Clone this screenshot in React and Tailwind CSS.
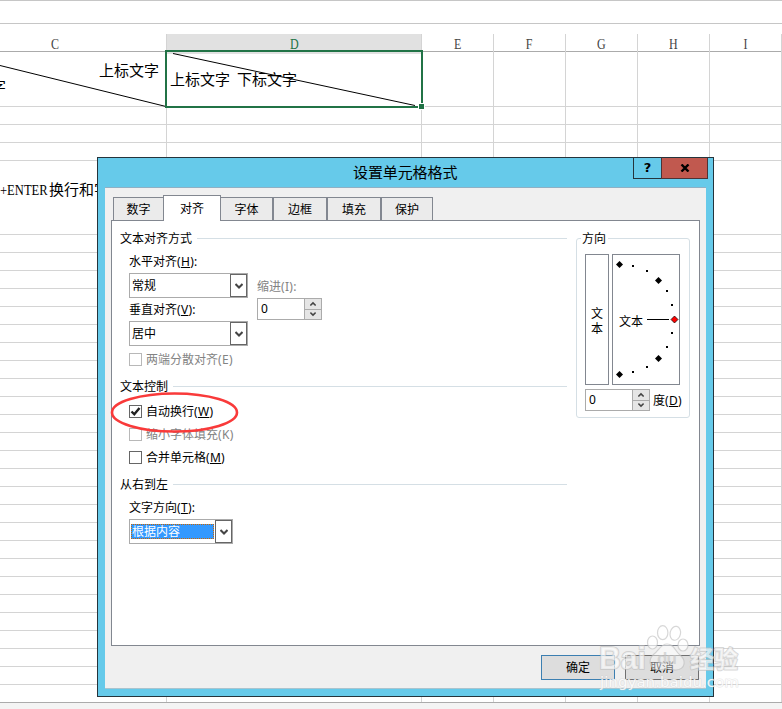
import React, { useState } from 'react';

const columns = ['C', 'D', 'E', 'F', 'G', 'H', 'I'];
const gridCols = 'grid grid-cols-[167px_255px_72px_72px_72px_72px_72px]';
const uiFont = 'font-["Noto_Sans","Noto_Sans_CJK_SC",sans-serif]';
const cellFont = 'font-["Liberation_Serif","Noto_Sans_CJK_SC",serif]';

// Empty sheet row, the height class is passed in by the caller
function SheetRow({ height = 'h-[18px]', children }) {
  return (
    <div className={`${gridCols} ${height}`}>
      {columns.map((c) => (
        <div key={c} className="relative border-r border-b border-[#d4d4d4]">
          {children ? children[c] : null}
        </div>
      ))}
    </div>
  );
}

function Chevron({ up = false, size = 8 }) {
  return (
    <svg width={size} height={size} viewBox="0 0 8 8" fill="none" stroke="#444" strokeWidth="2">
      <path d={up ? 'M0.5 6 L4 2.5 L7.5 6' : 'M0.5 2 L4 5.5 L7.5 2'} />
    </svg>
  );
}

function Combo({ value, width = 'w-[119px]', active = false }) {
  return (
    <div className={`${width} flex h-[25px] border border-[#ababab] bg-white`}>
      <div className="flex flex-1 items-center pl-px">
        <span
          className={`flex h-[15px] flex-1 items-center text-[12px] ${
            active ? 'mr-px border border-dotted border-[#cc6600] bg-[#3399ff] text-white' : 'pl-px'
          }`}
        >
          {value}
        </span>
      </div>
      <div className="flex w-[17px] items-center justify-center border border-[#666] bg-white">
        <Chevron size={8} />
      </div>
    </div>
  );
}

function Spinner() {
  return (
    <div className="flex h-[22px] w-[65px] border border-[#ababab] bg-white">
      <span className="flex flex-1 items-center pl-[3px] text-[12px]">0</span>
      <div className="flex w-[17px] flex-col border-l border-[#ababab] bg-[#e5e5e5]">
        <div className="flex flex-1 items-center justify-center border-b border-[#ababab]">
          <Chevron up size={6} />
        </div>
        <div className="flex flex-1 items-center justify-center">
          <Chevron size={6} />
        </div>
      </div>
    </div>
  );
}

function Hotkey({ letter, plain }) {
  return <span className="tracking-[0.3px]">({plain ? letter : <u>{letter}</u>})</span>;
}

function Check({ label, hotkey, disabled, checked, onClick }) {
  return (
    <div className="flex h-[13px] items-center gap-1 pl-[17px]" onClick={onClick}>
      <div
        className={`flex h-[13px] w-[13px] shrink-0 items-center justify-center border bg-white ${
          disabled ? 'border-[#b8b8b8]' : 'border-[#666]'
        }`}
      >
        {checked && (
          <svg width="11" height="11" viewBox="0 0 11 11" fill="none" stroke="#222" strokeWidth="2.4">
            <path d="M1.5 5.5 L4.3 8.3 L9.5 2" />
          </svg>
        )}
      </div>
      <span className={`text-[12px] leading-[13px] ${disabled ? 'text-[#838383]' : 'text-black'}`}>
        {label}
        <Hotkey letter={hotkey} plain={disabled} />
      </span>
    </div>
  );
}

function SectionTitle({ children }) {
  return (
    <div className="flex h-4 items-center gap-[5px] pl-2 text-[12px] leading-4">
      <span>{children}</span>
      <div className="-mt-px h-px flex-1 bg-[#d5dfe5]" />
    </div>
  );
}

function Label({ text, hotkey }) {
  return (
    <div className="h-4 pl-[17px] text-[12px] leading-4">
      {text}
      <Hotkey letter={hotkey} />:
    </div>
  );
}

function Dial() {
  const diamonds = [[7, 10], [46, 26], [46, 104], [7, 120]];
  const dots = [[20, 11], [34, 16], [54, 36], [59, 50], [59, 78], [54, 92], [34, 112], [20, 117]];
  return (
    <div className="relative h-[131px] w-[68px] border border-[#828790]">
      <svg className="absolute -top-px -left-px" width="68" height="131">
        {diamonds.map(([x, y]) => (
          <path key={`${x}-${y}`} d={`M${x + 0.5} ${y - 3} l3.5 3.5 l-3.5 3.5 l-3.5 -3.5 z`} />
        ))}
        {dots.map(([x, y]) => (
          <rect key={`${x}-${y}`} x={x} y={y} width="2" height="2" />
        ))}
        <rect x="35" y="65" width="22" height="1" />
        <path d="M62.5 62 l3.5 3.5 l-3.5 3.5 l-3.5 -3.5 z" fill="#f00" stroke="#000" strokeWidth="0.7" />
      </svg>
      <span className="block pt-[59px] pl-1.5 text-[12px] leading-4">文本</span>
    </div>
  );
}

function Orientation() {
  return (
    <div className="mt-[17px] ml-[9px] h-[180px] w-[114px] rounded-[3px] border border-[#d5dfe5]">
      <div className="-mt-2 ml-1 h-4 w-[27px] bg-white pl-px text-[12px] leading-4">方向</div>
      <div className="mt-[7px] ml-2 flex gap-[3px]">
        <div className="flex h-[131px] w-6 flex-col items-center border border-[#828790] pt-[51px] text-[12px] leading-[15px]">
          <span>文</span>
          <span>本</span>
        </div>
        <Dial />
      </div>
      <div className="mt-1 ml-2 flex items-center gap-[3px] text-[12px]">
        <Spinner />
        <span className="pt-px leading-4">
          度<Hotkey letter="D" />
        </span>
      </div>
    </div>
  );
}

function Tabs() {
  const tabs = [
    { name: '数字', width: 'w-[50px]' },
    { name: '对齐', width: 'w-[58px]', active: true },
    { name: '字体', width: 'w-[52px]' },
    { name: '边框', width: 'w-[54px]' },
    { name: '填充', width: 'w-[54px]' },
    { name: '保护', width: 'w-[52px]' },
  ];
  return (
    <div className="flex h-[25px] items-end pl-2 text-[12px]">
      {tabs.map((tab) =>
        tab.active ? (
          <div
            key={tab.name}
            className={`${tab.width} relative z-10 -mb-px flex h-[26px] items-center justify-center border border-b-0 border-[#828790] bg-white`}
          >
            {tab.name}
          </div>
        ) : (
          <div
            key={tab.name}
            className={`${tab.width} flex h-[23px] items-center justify-center border border-b-0 border-[#828790] bg-[#ebebeb] pt-0.5 first:border-r-0 nth-3:border-l-0`}
          >
            {tab.name}
          </div>
        )
      )}
    </div>
  );
}

function FormatDialog() {
  const [wrap, setWrap] = useState(true);

  return (
    <div className={`${uiFont} absolute top-[157px] left-[97px] flex h-[540px] w-[617px] flex-col border border-[#25343c] bg-[#66caea] text-black`}>
      {/* Title bar */}
      <div className="flex h-[29px] justify-end">
        <div className="flex-1 pl-[255px] text-[15px] leading-[29px] tracking-[-0.1px] whitespace-nowrap">设置单元格格式</div>
        <div className="-mt-px flex h-[22px] w-[75px] font-['DejaVu_Sans',sans-serif] font-bold">
          <div className="flex w-7 items-center justify-center border border-r-0 border-[#25343c] text-[13px]">?</div>
          <div className="flex w-[47px] items-center justify-center border border-[#4d3336] border-t-[#25343c] bg-[#c1594f]">
            <svg width="10" height="8" viewBox="0 0 10 8" stroke="#000" strokeWidth="2.4">
              <path d="M1.5 0.5 L8.5 7.5 M8.5 0.5 L1.5 7.5" />
            </svg>
          </div>
        </div>
        <div className="w-[5px]" />
      </div>

      <div className="mx-[7px] mb-[7px] flex flex-1 flex-col border-t border-b border-t-[#8fb0c4] border-b-[#a9c4cf] bg-[#f0f0f0] pt-[7px]">
        <Tabs />
        <div className="ml-1.5 flex h-[426px] w-[589px] border border-[#828790] bg-white">
          <div className="w-[455px] pt-[10px]">
            <SectionTitle>文本对齐方式</SectionTitle>
            <div className="flex pt-[7px]">
              <div className="w-[145px]">
                <Label text="水平对齐" hotkey="H" />
                <div className="pt-[3px] pl-[17px]"><Combo value="常规" /></div>
                <div className="pt-1"><Label text="垂直对齐" hotkey="V" /></div>
                <div className="pt-[3px] pl-[17px]"><Combo value="居中" /></div>
              </div>
              <div className="pt-[25px]">
                <div className="h-[19px] text-[12px] leading-4 text-[#838383]">
                  缩进<Hotkey letter="I" plain />:
                </div>
                <Spinner />
              </div>
            </div>
            <div className="h-[26px] pt-[7px]">
              <Check label="两端分散对齐" hotkey="E" disabled />
            </div>
            <div className="pt-[7px]"><SectionTitle>文本控制</SectionTitle></div>
            <div className="flex flex-col gap-[10px] pt-[10px]">
              <Check label="自动换行" hotkey="W" checked={wrap} onClick={() => setWrap(!wrap)} />
              <Check label="缩小字体填充" hotkey="K" disabled />
              <Check label="合并单元格" hotkey="M" />
            </div>
            <div className="pt-[13px]"><SectionTitle>从右到左</SectionTitle></div>
            <div className="pt-[7px]"><Label text="文字方向" hotkey="T" /></div>
            <div className="pt-[3px] pl-[17px]"><Combo value="根据内容" width="w-[104px]" active /></div>
          </div>
          <Orientation />
        </div>
        <div className="flex gap-[10px] pt-[9px] pl-[436px] text-[12px]">
          <button className="h-[25px] w-[74px] border border-[#3c7fb1] bg-[#dddddd]">确定</button>
          <button className="h-[25px] w-[74px] border border-[#707070] bg-[#dddddd]">取消</button>
        </div>
      </div>
    </div>
  );
}

function Watermark() {
  return (
    <svg className="pointer-events-none absolute top-[620px] left-[596px]" width="150" height="76" fill="#fff" fillOpacity="0.65" stroke="#bdbdbd" strokeOpacity="0.6" strokeWidth="1.2">
      <g paintOrder="stroke" strokeLinejoin="round">
        <text x="3" y="49" fontFamily="Liberation Sans" fontWeight="bold" fontSize="31" textLength="47" lengthAdjust="spacingAndGlyphs" strokeWidth="2">Bai</text>
        <text x="94" y="48" fontFamily="Noto Sans CJK SC" fontWeight="bold" fontSize="24" textLength="48" strokeWidth="2">经验</text>
        <text x="4" y="67" fontFamily="DejaVu Sans" fontSize="14.5" fillOpacity="0.85" strokeOpacity="0.35" textLength="139" lengthAdjust="spacingAndGlyphs">jingyan.baidu.com</text>
      </g>
      <ellipse cx="56.5" cy="22.5" rx="5" ry="6.5" />
      <ellipse cx="66.7" cy="12.7" rx="5.2" ry="7" />
      <ellipse cx="79.3" cy="13.3" rx="5.2" ry="7" transform="rotate(12 79.3 13.3)" />
      <ellipse cx="87" cy="25" rx="5" ry="6" />
      <path fillOpacity="0.45" d="M71 24 C65 24 63 30 58 34 C52 39 53 49 61 50 C66 50 68 49 71 49 C74 49 77 50 80 50 C90 49 90 40 84 35 C79 31 78 24 71 24 Z" />
      <text x="61" y="44" fontFamily="Liberation Sans" fontWeight="bold" fontSize="17" fill="#c4c4c4" stroke="none" textLength="20">du</text>
    </svg>
  );
}

export default function App() {
  return (
    <div className="relative h-[709px] w-[782px] overflow-hidden bg-white">
      <div className="h-6 border-t border-b border-[#c6c6c6]" />
      {/* Column headers */}
      <div className={`${gridCols} mt-[10px] h-[18px] border-b border-[#ababab] ${cellFont} text-[15px] leading-[20px]`}>
        {columns.map((c) => (
          <div
            key={c}
            className={`border-r border-[#d4d4d4] text-center ${
              c === 'D' ? 'bg-[#e1e1e1] text-[#217346]' : 'text-[#444]'
            } ${c === 'C' ? 'pr-[56px]' : ''}`}
          >
            <span className="inline-block scale-x-[0.8]">{c}</span>
          </div>
        ))}
      </div>

      {/* Split header cells with a diagonal line */}
      <SheetRow height="h-[55px]">
        {{
          C: (
            <div className={`${cellFont} h-full overflow-hidden text-[15px] leading-[18px] text-black`}>
              <svg className="absolute top-0 left-0" width="167" height="55" stroke="#000">
                <path d="M0 13.5 L166 54.5" />
              </svg>
              <div className="pt-[10px] pr-[7px] text-right">上标文字</div>
              <div className="-mt-[2px] -ml-[9px]">字</div>
            </div>
          ),
          D: (
            <div className={`${cellFont} relative z-10 flex h-full items-center pt-0.5 pl-[3px] text-[15px] whitespace-pre text-black`}>
              <svg className="absolute top-0 left-0" width="255" height="55" stroke="#000">
                <path d="M6 1.5 L248 53.5" />
              </svg>
              <span>上标文字</span>
              <span className="pl-[7px]">下标文字</span>
              <div className="absolute -top-[2px] -left-[2px] h-[58px] w-[258px] border-2 border-[#217346]" />
              <div className="absolute top-[51px] left-[251px] h-[7px] w-[7px] border border-white bg-[#217346]" />
            </div>
          ),
        }}
      </SheetRow>
      <SheetRow />
      <SheetRow />
      <SheetRow />
      <SheetRow height="h-[74px]">
        {{
          C: (
            <div className={`${cellFont} flex pt-[19px] text-[15px] leading-[20px] whitespace-nowrap text-black`}>
              <span className="w-[49px] origin-left scale-x-[0.84]">+ENTER</span>
              <span>换行和字</span>
            </div>
          ),
        }}
      </SheetRow>
      {Array.from({ length: 25 }, (_, i) => (
        <SheetRow key={i} />
      ))}
      <div className={`${gridCols} h-[17px]`}>
        {columns.map((c) => (
          <div key={c} className="border-r border-[#d4d4d4]" />
        ))}
      </div>
      <div className="h-[7px] border-t border-[#ababab] bg-[#f4f4f4]" />

      <div className="relative z-20 -mt-[709px] h-[709px]">
        <FormatDialog />

        {/* Red marker around the wrap option */}
        <svg className="pointer-events-none absolute top-[390px] left-[108px]" width="134" height="46" fill="none">
          <ellipse cx="66.5" cy="22.5" rx="62.5" ry="19" stroke="#f93a3a" strokeWidth="2.6" />
        </svg>
        <Watermark />
      </div>
    </div>
  );
}
